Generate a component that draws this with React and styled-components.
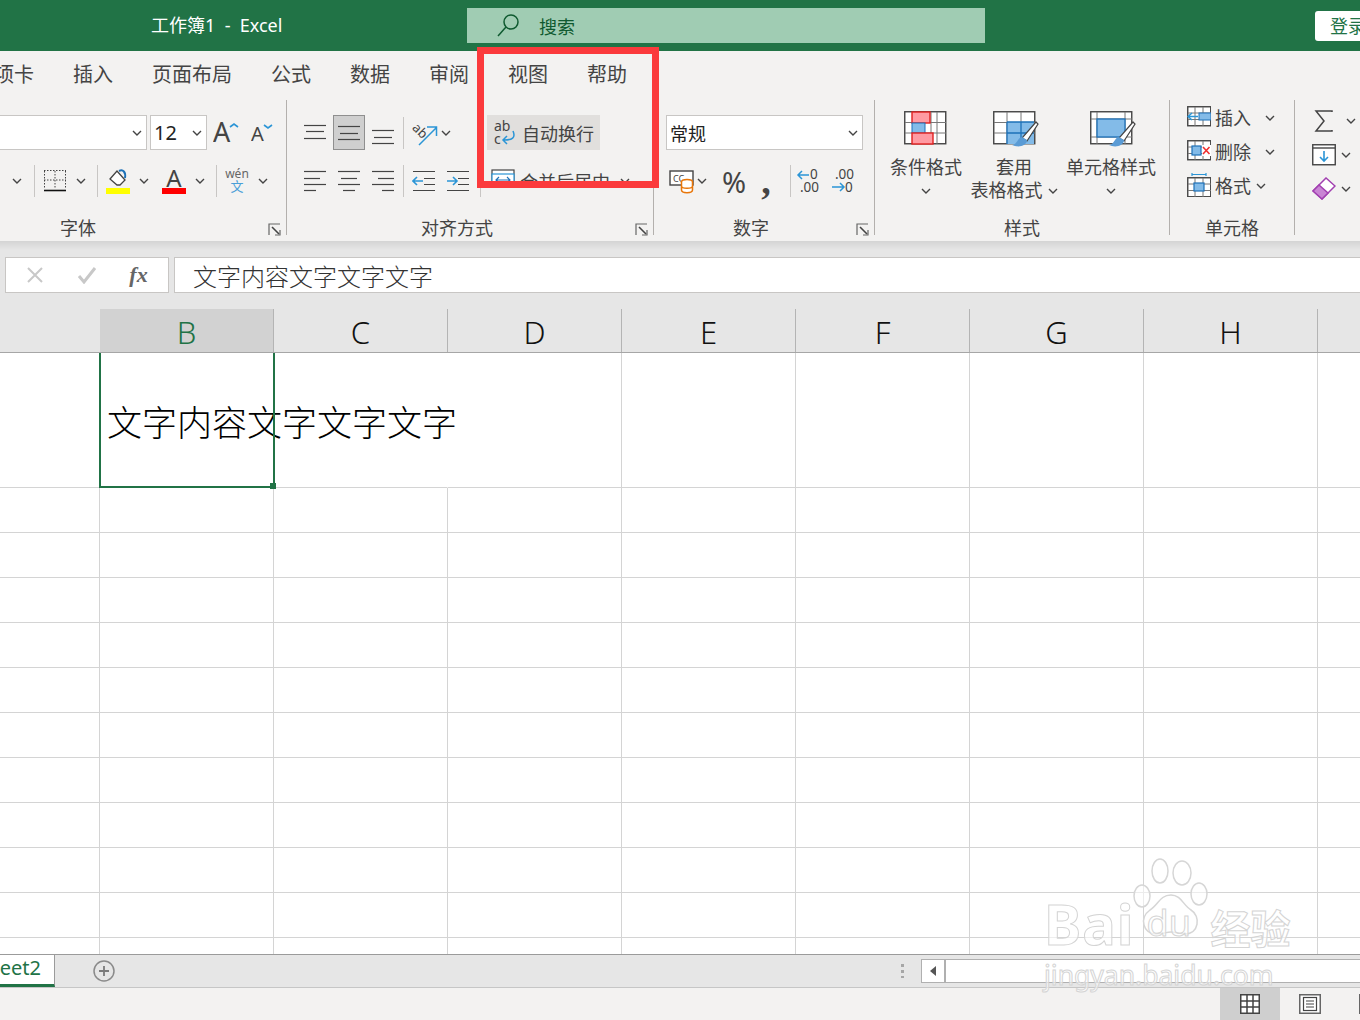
import React from 'react';
import styled, { createGlobalStyle } from 'styled-components';

const GREEN = '#217346';
const INK = '#444444';
const BLUE = '#2b95d6';
const DEEP = '#1d71b8';
const SOFT = '#83bbe8';

const COLUMNS = ['B', 'C', 'D', 'E', 'F', 'G', 'H', ''];
const TABS = ['选项卡', '插入', '页面布局', '公式', '数据', '审阅', '视图', '帮助'];
const CELL_TEXT = '文字内容文字文字文字';

const Chevron = () => (
  <svg width="10" height="6" viewBox="0 0 10 6">
    <path d="M1 1l4 4 4-4" fill="none" stroke={INK} strokeWidth="1.4" />
  </svg>
);

const Lines = ({ rows }) => (
  <svg width="24" height="24" viewBox="0 0 24 24">
    {rows.map(([a, b, y], i) => (
      <path key={i} d={`M${a} ${y + 0.5}H${b}`} stroke={INK} strokeWidth="1.2" />
    ))}
  </svg>
);

const Indent = ({ flip }) => (
  <svg width="24" height="22" viewBox="0 0 24 22">
    <path d="M1 1.5H23M12 8.5H23M12 14.5H23M1 20.5H23" stroke={INK} strokeWidth="1.2" />
    {flip ? (
      <path d="M1 11H10M7 7l4 4-4 4" fill="none" stroke={BLUE} strokeWidth="1.6" />
    ) : (
      <path d="M11 11H2M5 7l-4 4 4 4" fill="none" stroke={BLUE} strokeWidth="1.6" />
    )}
  </svg>
);

const FontUp = () => (
  <svg width="26" height="24" viewBox="0 0 26 24">
    <text x="0" y="21" fontSize="27" fill={INK} fontFamily="Noto Sans">A</text>
    <path d="M17 6l4-3 4 3" fill="none" stroke={BLUE} strokeWidth="1.6" />
  </svg>
);

const FontDown = () => (
  <svg width="22" height="20" viewBox="0 0 22 20">
    <text x="0" y="18" fontSize="20" fill={INK} fontFamily="Noto Sans">A</text>
    <path d="M13 2l4 3 4-3" fill="none" stroke={BLUE} strokeWidth="1.6" />
  </svg>
);

const BorderIcon = () => (
  <svg width="24" height="24" viewBox="0 0 24 24">
    <path d="M1.5 2V20M22.5 2V20M1 1.5H23M12 2V20M1 11H23" stroke={INK} strokeWidth="1" strokeDasharray="1.5 1.5" fill="none" />
    <path d="M1 21.5H23" stroke="#111" strokeWidth="1.6" />
  </svg>
);

const FillIcon = () => (
  <svg width="24" height="26" viewBox="0 0 24 26">
    <path d="M4 11l7-8 8 9-5 5-3 0z" fill="#fff" stroke={INK} strokeWidth="1.3" />
    <path d="M13 3c4-2 7 1 6 7" fill="none" stroke={DEEP} strokeWidth="2" />
    <rect x="0" y="20" width="24" height="6" fill="#ffff00" />
  </svg>
);

const ColorIcon = () => (
  <svg width="24" height="26" viewBox="0 0 24 26">
    <text x="12" y="19" fontSize="24" textAnchor="middle" fill={INK} fontFamily="Noto Sans">A</text>
    <rect x="0" y="20" width="24" height="6" fill="#ff0000" />
  </svg>
);

const PhoneticIcon = () => (
  <svg width="24" height="26" viewBox="0 0 24 26">
    <text x="12" y="10" fontSize="12" textAnchor="middle" fill="#666" fontFamily="Noto Sans">wén</text>
    <text x="12" y="23" fontSize="13" textAnchor="middle" fill="#4a9fd8" fontFamily="Noto Sans CJK SC">文</text>
  </svg>
);

const OrientIcon = () => (
  <svg width="26" height="26" viewBox="0 0 26 26">
    <text x="1" y="15" fontSize="13" fill={INK} fontFamily="Noto Sans" transform="rotate(45 8 10)">ab</text>
    <path d="M7 25L24 8M15 7h9.500v9" fill="none" stroke={BLUE} strokeWidth="1.500" />
  </svg>
);

const WrapIcon = () => (
  <svg width="24" height="26" viewBox="0 0 24 26">
    <text x="1" y="11" fontSize="14" fill={INK} fontFamily="Noto Sans">ab</text>
    <text x="1" y="24" fontSize="14" fill={INK} fontFamily="Noto Sans">c</text>
    <path d="M20 11c3 7-1 9-9 9M14 16l-4 4 4 4" fill="none" stroke={BLUE} strokeWidth="1.500" />
  </svg>
);

const MergeIcon = () => (
  <svg width="24" height="24" viewBox="0 0 24 24">
    <rect x="1" y="1" width="22" height="22" fill="#fff" stroke={INK} strokeWidth="1.2" />
    <rect x="1" y="5" width="22" height="12" fill="#fff" stroke={BLUE} strokeWidth="1.2" />
    <path d="M5 11H19M8 8l-3 3 3 3M16 8l3 3-3 3" fill="none" stroke={DEEP} strokeWidth="1.200" />
  </svg>
);

const AccountIcon = () => (
  <svg width="26" height="26" viewBox="0 0 26 26">
    <rect x="1" y="3" width="23" height="14" fill="#fff" stroke={INK} strokeWidth="1.400" />
    <text x="4" y="14" fontSize="9" fill={INK} fontFamily="Noto Sans">CC</text>
    <ellipse cx="18" cy="14" rx="5.500" ry="2.500" fill="#fff" stroke="#e8760a" strokeWidth="1.500" />
    <path d="M12.500 14V22c0 3.500 11 3.500 11 0V14M12.500 18c0 3 11 3 11 0" fill="#fff" stroke="#e8760a" strokeWidth="1.500" />
  </svg>
);

const DecimalMore = () => (
  <svg width="26" height="26" viewBox="0 0 26 26">
    <text x="14" y="11" fontSize="13.500" fill={INK} fontFamily="Noto Sans">0</text>
    <text x="4" y="24" fontSize="13.500" fill={INK} fontFamily="Noto Sans">.00</text>
    <path d="M13 7H2M6 3L2 7l4 4" fill="none" stroke={BLUE} strokeWidth="1.500" />
  </svg>
);

const DecimalLess = () => (
  <svg width="26" height="26" viewBox="0 0 26 26">
    <text x="4" y="11" fontSize="13.500" fill={INK} fontFamily="Noto Sans">.00</text>
    <text x="14" y="24" fontSize="13.500" fill={INK} fontFamily="Noto Sans">0</text>
    <path d="M1 19H13M9 15l4 4-4 4" fill="none" stroke={BLUE} strokeWidth="1.500" />
  </svg>
);

const Launcher = () => (
  <svg width="13" height="13" viewBox="0 0 13 13">
    <path d="M1 12V1H12M7 12H12V7" fill="none" stroke="#666" strokeWidth="1.200" />
    <path d="M4 4L11 11" stroke="#444" strokeWidth="1.600" />
  </svg>
);

const Brush = ({ x, y }) => (
  <g transform={`translate(${x} ${y})`}>
    <path d="M20 0l2 2L11 19l-5-3z" fill="#fff" stroke={INK} strokeWidth="1.200" />
    <path d="M6 15c-5 1-4 7-10 8 6 3 15 1 15-5z" fill="#5a9bd5" />
  </g>
);

const CondIcon = () => (
  <svg width="44" height="34" viewBox="0 0 44 34">
    <rect x=".75" y=".75" width="41" height="32" fill="#fff" stroke={INK} strokeWidth="1.400" />
    <path d="M33 1V33M27 1V33M1 11.500H42M1 22H42" stroke="#777" strokeWidth="1" />
    <rect x="8" y="1" width="18" height="11" fill="#ff9aa2" stroke="#e02020" strokeWidth="1.400" />
    <rect x="8" y="12" width="13" height="10" fill={SOFT} stroke={DEEP} strokeWidth="1" />
    <rect x="8" y="22" width="21" height="11" fill="#ff9aa2" stroke="#e02020" strokeWidth="1.400" />
  </svg>
);

const TableStyleIcon = () => (
  <svg width="46" height="42" viewBox="0 0 46 42">
    <rect x=".75" y=".75" width="41" height="32" fill="#fff" stroke={INK} strokeWidth="1.400" />
    <path d="M14 1V33M28 1V33M1 11.500H42M1 22H42" stroke="#777" strokeWidth="1" />
    <rect x="14" y="11" width="27" height="22" fill={SOFT} />
    <path d="M14 11H41M14 22H41M14 11V33M28 11V33" stroke={DEEP} strokeWidth="1.300" />
    <Brush x={23} y={11} />
  </svg>
);

const CellStyleIcon = () => (
  <svg width="46" height="42" viewBox="0 0 46 42">
    <rect x=".75" y=".75" width="41" height="32" fill="#fff" stroke={INK} strokeWidth="1.400" />
    <path d="M7 1V33M35 1V33M1 8H42M1 26H42" stroke="#777" strokeWidth="1" />
    <rect x="7" y="8" width="28" height="18" fill={SOFT} stroke={DEEP} strokeWidth="1.300" />
    <Brush x={23} y={11} />
  </svg>
);

const GridBase = () => (
  <>
    <rect x=".75" y=".75" width="23" height="19" fill="#fff" stroke={INK} strokeWidth="1.400" />
    <path d="M8 1V20M16 1V20M1 7H24M1 13.500H24" stroke="#777" strokeWidth="1" />
  </>
);

const InsertIcon = () => (
  <svg width="24" height="22" viewBox="0 0 24 22">
    <GridBase />
    <rect x="12" y="7" width="12" height="7" fill={SOFT} stroke={DEEP} strokeWidth="1" />
    <path d="M11 10.500H2M5 7l-4 3.500L5 14" fill="none" stroke={BLUE} strokeWidth="1.500" />
  </svg>
);

const DeleteIcon = () => (
  <svg width="24" height="22" viewBox="0 0 24 22">
    <GridBase />
    <rect x="5" y="6" width="9" height="9" fill={SOFT} stroke={DEEP} strokeWidth="1.200" />
    <rect x="15" y="5" width="9" height="11" fill="#fff" />
    <path d="M16 7l6.500 7M22.500 7L16 14" stroke="#f03030" strokeWidth="1.600" />
  </svg>
);

const FormatIcon = () => (
  <svg width="24" height="24" viewBox="0 0 24 24">
    <path d="M5 1.500H19M5 0V3M19 0V3" stroke={BLUE} strokeWidth="1.200" />
    <g transform="translate(0 4)">
      <GridBase />
      <rect x="7" y="6" width="10" height="8" fill={SOFT} stroke={DEEP} strokeWidth="1.200" />
    </g>
  </svg>
);

const SigmaIcon = () => (
  <svg width="20" height="24" viewBox="0 0 20 24">
    <path d="M18 3V2H2l8 10-8 10h16v-1" fill="none" stroke={INK} strokeWidth="1.500" />
  </svg>
);

const FillDownIcon = () => (
  <svg width="24" height="22" viewBox="0 0 24 22">
    <rect x=".75" y=".75" width="22.500" height="20" fill="#fff" stroke={INK} strokeWidth="1.400" />
    <path d="M1 4H23" stroke={INK} strokeWidth="1.400" />
    <path d="M12 7V17M8 13l4 4 4-4" fill="none" stroke={BLUE} strokeWidth="1.600" />
  </svg>
);

const EraserIcon = () => (
  <svg width="24" height="24" viewBox="0 0 24 24">
    <path d="M1 14L14 1l9 8-13 13z" fill="#fff" stroke="#a13fb0" strokeWidth="1.500" />
    <path d="M1 14l6-6 9 8-6 6z" fill="#c985d4" stroke="#a13fb0" strokeWidth="1.500" />
  </svg>
);

const PawMark = () => (
  <svg width="76" height="96" viewBox="0 0 76 96">
    <g fill="rgba(255,255,255,.55)" stroke="#d6d6d6" strokeWidth="1.500">
      <ellipse cx="9" cy="38" rx="8" ry="11" />
      <ellipse cx="27" cy="13" rx="8" ry="12" />
      <ellipse cx="49" cy="15" rx="9" ry="12" />
      <ellipse cx="66" cy="36" rx="8" ry="11" />
      <path d="M38 37c10 0 12 10 20 15 10 6 8 24-6 24-7 0-9-2-14-2s-8 2-15 2C10 76 6 60 17 52c8-5 10-15 21-15z" />
    </g>
  </svg>
);

const GlobalStyle = createGlobalStyle`
  html, body {
    margin: 0;
    padding: 0;
    background: #fff;
  }
  body {
    font-family: "Noto Sans", "Noto Sans CJK SC", sans-serif;
  }
`;

const Page = styled.div`
  width: 1360px;
  height: 1020px;
  position: relative;
  overflow: hidden;
  display: flex;
  flex-direction: column;
`;

const TitleBar = styled.header`
  height: 51px;
  flex: none;
  background: ${GREEN};
  display: flex;
  align-items: center;
  padding-left: 151px;
`;

const DocTitle = styled.div`
  width: 316px;
  flex: none;
  color: #fff;
  font-size: 18px;
  white-space: pre;
  margin-top: -3px;
`;

const SearchBox = styled.div`
  width: 518px;
  height: 35px;
  flex: none;
  background: #a0ccb3;
  display: flex;
  align-items: center;
  gap: 19px;
  padding-left: 29px;
  box-sizing: border-box;
  color: #0f5a30;
  font-size: 18px;
`;

const LoginButton = styled.div`
  width: 70px;
  height: 30px;
  flex: none;
  margin-left: 330px;
  background: #fff;
  border-radius: 3px;
  color: ${GREEN};
  font-size: 18px;
  line-height: 30px;
  padding-left: 15px;
  white-space: nowrap;
`;

const TabRow = styled.nav`
  height: 49px;
  flex: none;
  background: #f3f2f1;
  display: flex;
  align-items: center;
  gap: 39px;
  margin-left: -26px;
  padding-bottom: 4px;
  box-sizing: border-box;
  color: #444;
  font-size: 20px;
`;

const Ribbon = styled.section`
  height: 141px;
  flex: none;
  background: #f3f2f1;
  display: flex;
  margin-left: -104px;
  width: 1464px;
`;

const Group = styled.div`
  width: ${(p) => p.$w}px;
  height: 135px;
  flex: none;
  box-sizing: border-box;
  display: flex;
  flex-direction: column;
  border-right: ${(p) => (p.$open ? 'none' : '1px solid #b3b0ad')};
`;

const Controls = styled.div`
  flex: 1;
  min-height: 0;
  display: flex;
  flex-direction: column;
  padding-top: ${(p) => p.$top ?? 15}px;
`;

const ToolRow = styled.div`
  height: ${(p) => p.$h || 35}px;
  margin-bottom: ${(p) => p.$mb || 0}px;
  padding-left: ${(p) => p.$pl || 0}px;
  display: flex;
  align-items: center;
  flex: none;
`;

const Tool = styled.div`
  width: ${(p) => p.$w}px;
  margin-left: ${(p) => p.$ml || 0}px;
  height: 100%;
  flex: none;
  display: flex;
  align-items: center;
  justify-content: center;
`;

const ActiveTool = styled(Tool)`
  background: #cfcfcf;
  box-shadow: inset 0 0 0 1px #8f8f8f;
`;

const Divider = styled.div`
  width: 1px;
  height: 32px;
  flex: none;
  background: #c8c6c4;
  margin-left: ${(p) => p.$ml || 0}px;
`;

const SelectBox = styled.div`
  width: ${(p) => p.$w}px;
  height: 35px;
  margin-left: ${(p) => p.$ml || 0}px;
  flex: none;
  box-sizing: border-box;
  background: #fff;
  border: 1px solid #c8c6c4;
  display: flex;
  align-items: center;
  justify-content: space-between;
  padding: 0 4px 0 3px;
  color: #222;
  font-size: ${(p) => p.$size || 18}px;
`;

const TextButton = styled.div`
  margin-left: ${(p) => p.$ml || 0}px;
  width: ${(p) => p.$w}px;
  height: ${(p) => p.$h || 35}px;
  flex: none;
  box-sizing: border-box;
  display: flex;
  align-items: center;
  gap: 5px;
  padding-left: ${(p) => p.$pl || 6}px;
  background: ${(p) => (p.$on ? '#e1dfdd' : 'transparent')};
  color: #444;
  font-size: 18px;
  white-space: nowrap;
`;

const BigGlyph = styled.span`
  color: ${INK};
  font-size: ${(p) => p.$size}px;
  font-family: ${(p) => p.$font || 'inherit'};
  font-weight: ${(p) => p.$weight || 400};
  line-height: 1;
`;

const LabelRow = styled.div`
  height: 22px;
  margin-bottom: -4px;
  flex: none;
  display: flex;
  color: #444;
  font-size: 18px;
  line-height: 22px;
`;

const GroupLabel = styled.div`
  flex: 1;
  text-align: center;
  padding-right: ${(p) => (p.$launcher ? 26 : 0)}px;
`;

const LauncherSlot = styled.div`
  position: absolute;
  right: 5px;
  top: 6px;
  line-height: 0;
`;

const LabelBar = styled(LabelRow)`
  position: relative;
`;

const StyleButtons = styled.div`
  display: flex;
  padding-left: 15px;
  gap: 7px;
`;

const StyleButton = styled.div`
  width: ${(p) => p.$w}px;
  flex: none;
  display: flex;
  flex-direction: column;
  align-items: center;
  color: #444;
  font-size: 18px;
  line-height: 23px;
`;

const StyleIconSlot = styled.div`
  height: 45px;
  align-self: ${(p) => (p.$shift ? 'flex-start' : 'center')};
  padding-left: ${(p) => p.$shift || 0}px;
  line-height: 0;
`;

const StyleCaption = styled.div`
  display: flex;
  align-items: center;
  gap: 5px;
  height: 23px;
  white-space: nowrap;
`;

const CellAction = styled.div`
  height: 34px;
  padding-left: 17px;
  display: flex;
  align-items: center;
  gap: 4px;
  color: #444;
  font-size: 18px;
`;

const ActionChevron = styled.span`
  margin-left: ${(p) => p.$ml}px;
  line-height: 0;
`;

const EditAction = styled.div`
  height: 34px;
  padding-left: ${(p) => p.$pl}px;
  display: flex;
  align-items: center;
  gap: ${(p) => p.$gap}px;
`;

const FormulaArea = styled.div`
  height: 68px;
  flex: none;
  box-sizing: border-box;
  background: linear-gradient(#d4d4d4, #e6e6e6 9px);
  display: flex;
  gap: 5px;
  padding: 16px 0 0 5px;
`;

const NameBox = styled.div`
  width: 164px;
  height: 36px;
  flex: none;
  box-sizing: border-box;
  background: #fff;
  border: 1px solid #c8c6c4;
  display: flex;
  align-items: center;
  justify-content: space-around;
  padding: 0 4px;
`;

const FxMark = styled.span`
  font-family: "Liberation Serif", serif;
  font-style: italic;
  font-weight: 700;
  font-size: 22px;
  color: #666;
`;

const FormulaInput = styled.div`
  flex: 1;
  height: 36px;
  box-sizing: border-box;
  background: #fff;
  border: 1px solid #c8c6c4;
  border-right: none;
  padding-left: 18px;
  font-size: 24px;
  line-height: 36px;
  font-weight: 300;
  color: #333;
  font-family: "Noto Sans CJK SC", sans-serif;
`;

const HeaderRow = styled.div`
  height: 44px;
  flex: none;
  box-sizing: border-box;
  display: flex;
  background: #e6e6e6;
  border-bottom: 1px solid #a6a6a6;
`;

const CornerCell = styled.div`
  width: 100px;
  flex: none;
`;

const ColHead = styled.div`
  width: 174px;
  flex: none;
  box-sizing: border-box;
  border-right: 1px solid #b4b4b4;
  background: ${(p) => (p.$on ? '#d2d2d2' : 'transparent')};
  color: ${(p) => (p.$on ? GREEN : '#111')};
  font-size: 31px;
  font-weight: 300;
  text-align: center;
  line-height: 47px;
`;

const Sheet = styled.div`
  flex: 1;
  min-height: 0;
  overflow: hidden;
  background: #fff;
`;

const SheetRow = styled.div`
  height: ${(p) => p.$h}px;
  display: flex;
`;

const RowHead = styled.div`
  width: 100px;
  flex: none;
  box-sizing: border-box;
  border-right: 1px solid #d4d4d4;
  border-bottom: 1px solid #d4d4d4;
  border-right-color: ${(p) => (p.$open ? 'transparent' : '#d4d4d4')};
`;

const Cell = styled.div`
  width: 174px;
  flex: none;
  box-sizing: border-box;
  border-right: 1px solid ${(p) => (p.$open ? 'transparent' : '#d4d4d4')};
  border-bottom: 1px solid #d4d4d4;
`;

const ActiveCell = styled(Cell)`
  position: relative;
  z-index: 1;
  display: flex;
  align-items: center;
  padding-left: 7px;
  white-space: nowrap;
  font-size: 35px;
  font-weight: 300;
  color: #000;
  font-family: "Noto Sans CJK SC", sans-serif;
`;

const SelectionFrame = styled.span`
  position: absolute;
  left: -1px;
  top: -2px;
  width: 176px;
  height: 137px;
  box-sizing: border-box;
  border: 2px solid ${GREEN};
  &::after {
    content: '';
    position: absolute;
    right: -3px;
    bottom: -3px;
    width: 6px;
    height: 6px;
    background: ${GREEN};
  }
`;

const SheetTabs = styled.div`
  height: 34px;
  flex: none;
  box-sizing: border-box;
  background: #e6e6e6;
  border-top: 1px solid #9b9b9b;
  border-bottom: 1px solid #c6c6c6;
  display: flex;
  align-items: center;
`;

const ActiveTab = styled.div`
  width: 55px;
  height: 32px;
  flex: none;
  margin-top: -1px;
  box-sizing: border-box;
  background: #fff;
  border-right: 1px solid #9b9b9b;
  border-bottom: 3px solid ${GREEN};
  color: ${GREEN};
  font-size: 20px;
  line-height: 26px;
  overflow: hidden;
  direction: rtl;
  padding-right: 13px;
  white-space: nowrap;
`;

const AddSheet = styled.div`
  margin-left: 38px;
  width: 22px;
  height: 22px;
  flex: none;
  line-height: 0;
`;

const SplitDots = styled.div`
  margin-left: 786px;
  width: 3px;
  height: 14px;
  flex: none;
  background: repeating-linear-gradient(#a6a6a6 0 3px, transparent 3px 6px);
`;

const ScrollTrack = styled.div`
  margin-left: 17px;
  flex: 1;
  height: 24px;
  box-sizing: border-box;
  background: #fff;
  border: 1px solid #b0b0b0;
  border-right: none;
  display: flex;
`;

const ScrollArrow = styled.div`
  width: 24px;
  flex: none;
  box-sizing: border-box;
  border-right: 2px solid #b0b0b0;
  display: flex;
  align-items: center;
  justify-content: center;
  &::before {
    content: '';
    border: 5px solid transparent;
    border-left: none;
    border-right: 6px solid #555;
  }
`;

const StatusBar = styled.footer`
  height: 32px;
  flex: none;
  background: #f3f2f1;
  display: flex;
  padding-left: 1220px;
`;

const ViewButton = styled.div`
  width: 60px;
  flex: none;
  display: flex;
  align-items: center;
  justify-content: center;
  background: ${(p) => (p.$on ? '#cfcfcf' : 'transparent')};
`;

const Highlight = styled.div`
  position: absolute;
  left: 477px;
  top: 47px;
  width: 182px;
  height: 141px;
  box-sizing: border-box;
  border: 7px solid #fb3a3c;
  pointer-events: none;
`;

const HiddenStrip = styled.div`
  position: absolute;
  left: 484px;
  top: 188px;
  width: 140px;
  height: 12px;
  background: #f3f2f1;
  pointer-events: none;
`;

const Watermark = styled.div`
  position: absolute;
  left: 1044px;
  top: 875px;
  width: 250px;
  pointer-events: none;
  color: rgba(255, 255, 255, 0.6);
  -webkit-text-stroke: 1px #d4d4d4;
`;

const WatermarkTop = styled.div`
  display: flex;
  align-items: flex-end;
  height: 79px;
  white-space: nowrap;
  font-weight: 700;
`;

const BrandWord = styled.span`
  font-size: 56px;
  line-height: 62px;
  letter-spacing: 1px;
`;

const PawWrap = styled.span`
  width: 76px;
  flex: none;
  position: relative;
  height: 96px;
  margin: 0 2px 0 -2px;
`;

const PawText = styled.span`
  position: absolute;
  left: 14px;
  top: 45px;
  font-size: 36px;
  line-height: 40px;
  font-weight: 400;
`;

const BrandCn = styled.span`
  font-size: 40px;
  line-height: 54px;
  font-family: "Noto Sans CJK SC", sans-serif;
`;

const WatermarkUrl = styled.div`
  margin-top: 4px;
  font-size: 26.500px;
  line-height: 34px;
  white-space: nowrap;
`;

const App = () => {
  const rowCount = 11;
  return (
    <Page>
      <GlobalStyle />
      <TitleBar>
        <DocTitle>工作簿1  -  Excel</DocTitle>
        <SearchBox>
          <svg width="24" height="26" viewBox="0 0 24 26">
            <circle cx="15" cy="9" r="7" fill="none" stroke="#0f5a30" strokeWidth="1.500" />
            <path d="M10 14L2 23" stroke="#0f5a30" strokeWidth="1.500" />
          </svg>
          搜索
        </SearchBox>
        <LoginButton>登录</LoginButton>
      </TitleBar>

      <TabRow>
        {TABS.map((t) => (
          <span key={t}>{t}</span>
        ))}
      </TabRow>

      <Ribbon>
        <Group $w={391}>
          <Controls>
            <ToolRow $mb={15}>
              <SelectBox $w={251}>
                <span />
                <Chevron />
              </SelectBox>
              <SelectBox $w={57} $ml={3} $size={20}>
                12
                <Chevron />
              </SelectBox>
              <Tool $w={38}><FontUp /></Tool>
              <Tool $w={33}><FontDown /></Tool>
            </ToolRow>
            <ToolRow $h={32} $pl={104}>
              <Tool $w={34}><Chevron /></Tool>
              <Divider />
              <Tool $w={39}><BorderIcon /></Tool>
              <Tool $w={14}><Chevron /></Tool>
              <Divider $ml={9} />
              <Tool $w={40}><FillIcon /></Tool>
              <Tool $w={12}><Chevron /></Tool>
              <Tool $w={36} $ml={6}><ColorIcon /></Tool>
              <Tool $w={16}><Chevron /></Tool>
              <Divider $ml={8} />
              <Tool $w={40}><PhoneticIcon /></Tool>
              <Tool $w={12}><Chevron /></Tool>
            </ToolRow>
          </Controls>
          <LabelBar>
            <GroupLabel $launcher>字体</GroupLabel>
            <LauncherSlot><Launcher /></LauncherSlot>
          </LabelBar>
        </Group>

        <Group $w={367}>
          <Controls>
            <ToolRow $mb={15}>
              <Tool $w={36} $ml={10}>
                <Lines rows={[[1, 23, 4], [3, 21, 10], [1, 23, 17]]} />
              </Tool>
              <ActiveTool $w={32}>
                <Lines rows={[[1, 23, 5], [3, 21, 12], [1, 23, 18]]} />
              </ActiveTool>
              <Tool $w={36}>
                <Lines rows={[[1, 23, 9], [3, 21, 16], [1, 23, 22]]} />
              </Tool>
              <Divider $ml={2} />
              <Tool $w={30} $ml={6}><OrientIcon /></Tool>
              <Tool $w={12}><Chevron /></Tool>
              <Divider $ml={28} />
              <TextButton $w={113} $ml={6} $on>
                <WrapIcon />
                <span>自动换行</span>
              </TextButton>
            </ToolRow>
            <ToolRow $h={32}>
              <Tool $w={34} $ml={11}>
                <Lines rows={[[1, 23, 2], [1, 17, 9], [1, 23, 15], [1, 13, 21]]} />
              </Tool>
              <Tool $w={34}>
                <Lines rows={[[1, 23, 2], [4, 20, 9], [1, 23, 15], [6, 18, 21]]} />
              </Tool>
              <Tool $w={34}>
                <Lines rows={[[1, 23, 2], [7, 23, 9], [1, 23, 15], [11, 23, 21]]} />
              </Tool>
              <Divider $ml={3} />
              <Tool $w={40}><Indent /></Tool>
              <Tool $w={28}><Indent flip /></Tool>
              <Divider $ml={8} />
              <TextButton $w={130} $ml={8} $pl={2} $h={32}>
                <MergeIcon />
                <span>合并后居中</span>
              </TextButton>
              <Tool $w={14} $ml={-1}><Chevron /></Tool>
            </ToolRow>
          </Controls>
          <LabelBar>
            <GroupLabel $launcher>对齐方式</GroupLabel>
            <LauncherSlot><Launcher /></LauncherSlot>
          </LabelBar>
        </Group>

        <Group $w={221}>
          <Controls>
            <ToolRow $mb={15}>
              <SelectBox $w={197} $ml={12}>
                常规
                <Chevron />
              </SelectBox>
            </ToolRow>
            <ToolRow $h={32}>
              <Tool $w={26} $ml={15}><AccountIcon /></Tool>
              <Tool $w={14}><Chevron /></Tool>
              <Tool $w={36} $ml={7}><BigGlyph $size={29}>%</BigGlyph></Tool>
              <Tool $w={22} $ml={3}>
                <BigGlyph $size={38} $font='"Liberation Serif", serif' $weight={700}>,</BigGlyph>
              </Tool>
              <Divider $ml={13} />
              <Tool $w={32} $ml={2}><DecimalMore /></Tool>
              <Tool $w={34} $ml={2}><DecimalLess /></Tool>
            </ToolRow>
          </Controls>
          <LabelBar>
            <GroupLabel $launcher>数字</GroupLabel>
            <LauncherSlot><Launcher /></LauncherSlot>
          </LabelBar>
        </Group>

        <Group $w={295}>
          <Controls $top={11}>
            <StyleButtons>
              <StyleButton $w={72}>
                <StyleIconSlot><CondIcon /></StyleIconSlot>
                <StyleCaption>条件格式</StyleCaption>
                <StyleCaption><Chevron /></StyleCaption>
              </StyleButton>
              <StyleButton $w={90}>
                <StyleIconSlot $shift={24}><TableStyleIcon /></StyleIconSlot>
                <StyleCaption>套用</StyleCaption>
                <StyleCaption>表格格式<Chevron /></StyleCaption>
              </StyleButton>
              <StyleButton $w={90}>
                <StyleIconSlot $shift={24}><CellStyleIcon /></StyleIconSlot>
                <StyleCaption>单元格样式</StyleCaption>
                <StyleCaption><Chevron /></StyleCaption>
              </StyleButton>
            </StyleButtons>
          </Controls>
          <LabelBar>
            <GroupLabel>样式</GroupLabel>
          </LabelBar>
        </Group>

        <Group $w={125}>
          <Controls $top={0}>
            <CellAction>
              <InsertIcon />
              <span>插入</span>
              <ActionChevron $ml={10}><Chevron /></ActionChevron>
            </CellAction>
            <CellAction>
              <DeleteIcon />
              <span>删除</span>
              <ActionChevron $ml={10}><Chevron /></ActionChevron>
            </CellAction>
            <CellAction>
              <FormatIcon />
              <span>格式</span>
              <ActionChevron $ml={1}><Chevron /></ActionChevron>
            </CellAction>
          </Controls>
          <LabelBar>
            <GroupLabel>单元格</GroupLabel>
          </LabelBar>
        </Group>

        <Group $w={65} $open>
          <Controls $top={4}>
            <EditAction $pl={19} $gap={12}>
              <SigmaIcon />
              <Chevron />
            </EditAction>
            <EditAction $pl={17} $gap={5}>
              <FillDownIcon />
              <Chevron />
            </EditAction>
            <EditAction $pl={17} $gap={5}>
              <EraserIcon />
              <Chevron />
            </EditAction>
          </Controls>
        </Group>
      </Ribbon>

      <FormulaArea>
        <NameBox>
          <svg width="18" height="18" viewBox="0 0 18 18">
            <path d="M2 2L16 16M16 2L2 16" stroke="#c8c8c8" strokeWidth="2" />
          </svg>
          <svg width="20" height="18" viewBox="0 0 20 18">
            <path d="M2 10l5 6L18 2" fill="none" stroke="#c8c8c8" strokeWidth="3" />
          </svg>
          <FxMark>fx</FxMark>
        </NameBox>
        <FormulaInput>{CELL_TEXT}</FormulaInput>
      </FormulaArea>

      <HeaderRow>
        <CornerCell />
        {COLUMNS.map((c, i) => (
          <ColHead key={i} $on={c === 'B'}>{c}</ColHead>
        ))}
      </HeaderRow>

      <Sheet>
        <SheetRow $h={135}>
          <RowHead />
          <ActiveCell $open>
            {CELL_TEXT}
            <SelectionFrame />
          </ActiveCell>
          {COLUMNS.slice(1).map((c, i) => (
            <Cell key={i} $open={c === 'C'} />
          ))}
        </SheetRow>
        {Array.from({ length: rowCount }, (_, r) => (
          <SheetRow key={r} $h={45}>
            <RowHead />
            {COLUMNS.map((c, i) => (
              <Cell key={i} />
            ))}
          </SheetRow>
        ))}
      </Sheet>

      <SheetTabs>
        <ActiveTab>Sheet2</ActiveTab>
        <AddSheet>
          <svg width="22" height="22" viewBox="0 0 22 22">
            <circle cx="11" cy="11" r="10" fill="none" stroke="#8a8a8a" strokeWidth="1.500" />
            <path d="M11 6V16M6 11H16" stroke="#7a7a7a" strokeWidth="1.800" />
          </svg>
        </AddSheet>
        <SplitDots />
        <ScrollTrack>
          <ScrollArrow />
        </ScrollTrack>
      </SheetTabs>

      <StatusBar>
        <ViewButton $on>
          <svg width="20" height="20" viewBox="0 0 20 20">
            <rect x=".75" y=".75" width="18.500" height="18.500" fill="#fff" stroke="#444" strokeWidth="1.500" />
            <path d="M7 1V19M13 1V19M1 7H19M1 13H19" stroke="#444" strokeWidth="1.500" />
          </svg>
        </ViewButton>
        <ViewButton>
          <svg width="22" height="20" viewBox="0 0 22 20">
            <rect x=".75" y=".75" width="20.500" height="18.500" fill="#fff" stroke="#666" strokeWidth="1.500" />
            <rect x="4.500" y="3.500" width="13" height="13" fill="#fff" stroke="#444" strokeWidth="1.200" />
            <path d="M7 7H15M7 10H15M7 13H15" stroke="#444" strokeWidth="1.200" />
          </svg>
        </ViewButton>
        <ViewButton>
          <svg width="22" height="20" viewBox="0 0 22 20">
            <rect x=".75" y=".75" width="20.500" height="18.500" fill="#fff" stroke="#666" strokeWidth="1.500" />
          </svg>
        </ViewButton>
      </StatusBar>

      <HiddenStrip />
      <Highlight />
      <Watermark>
        <WatermarkTop>
          <BrandWord>Bai</BrandWord>
          <PawWrap>
            <PawMark />
            <PawText>du</PawText>
          </PawWrap>
          <BrandCn>经验</BrandCn>
        </WatermarkTop>
        <WatermarkUrl>jingyan.baidu.com</WatermarkUrl>
      </Watermark>
    </Page>
  );
};

export default App;
